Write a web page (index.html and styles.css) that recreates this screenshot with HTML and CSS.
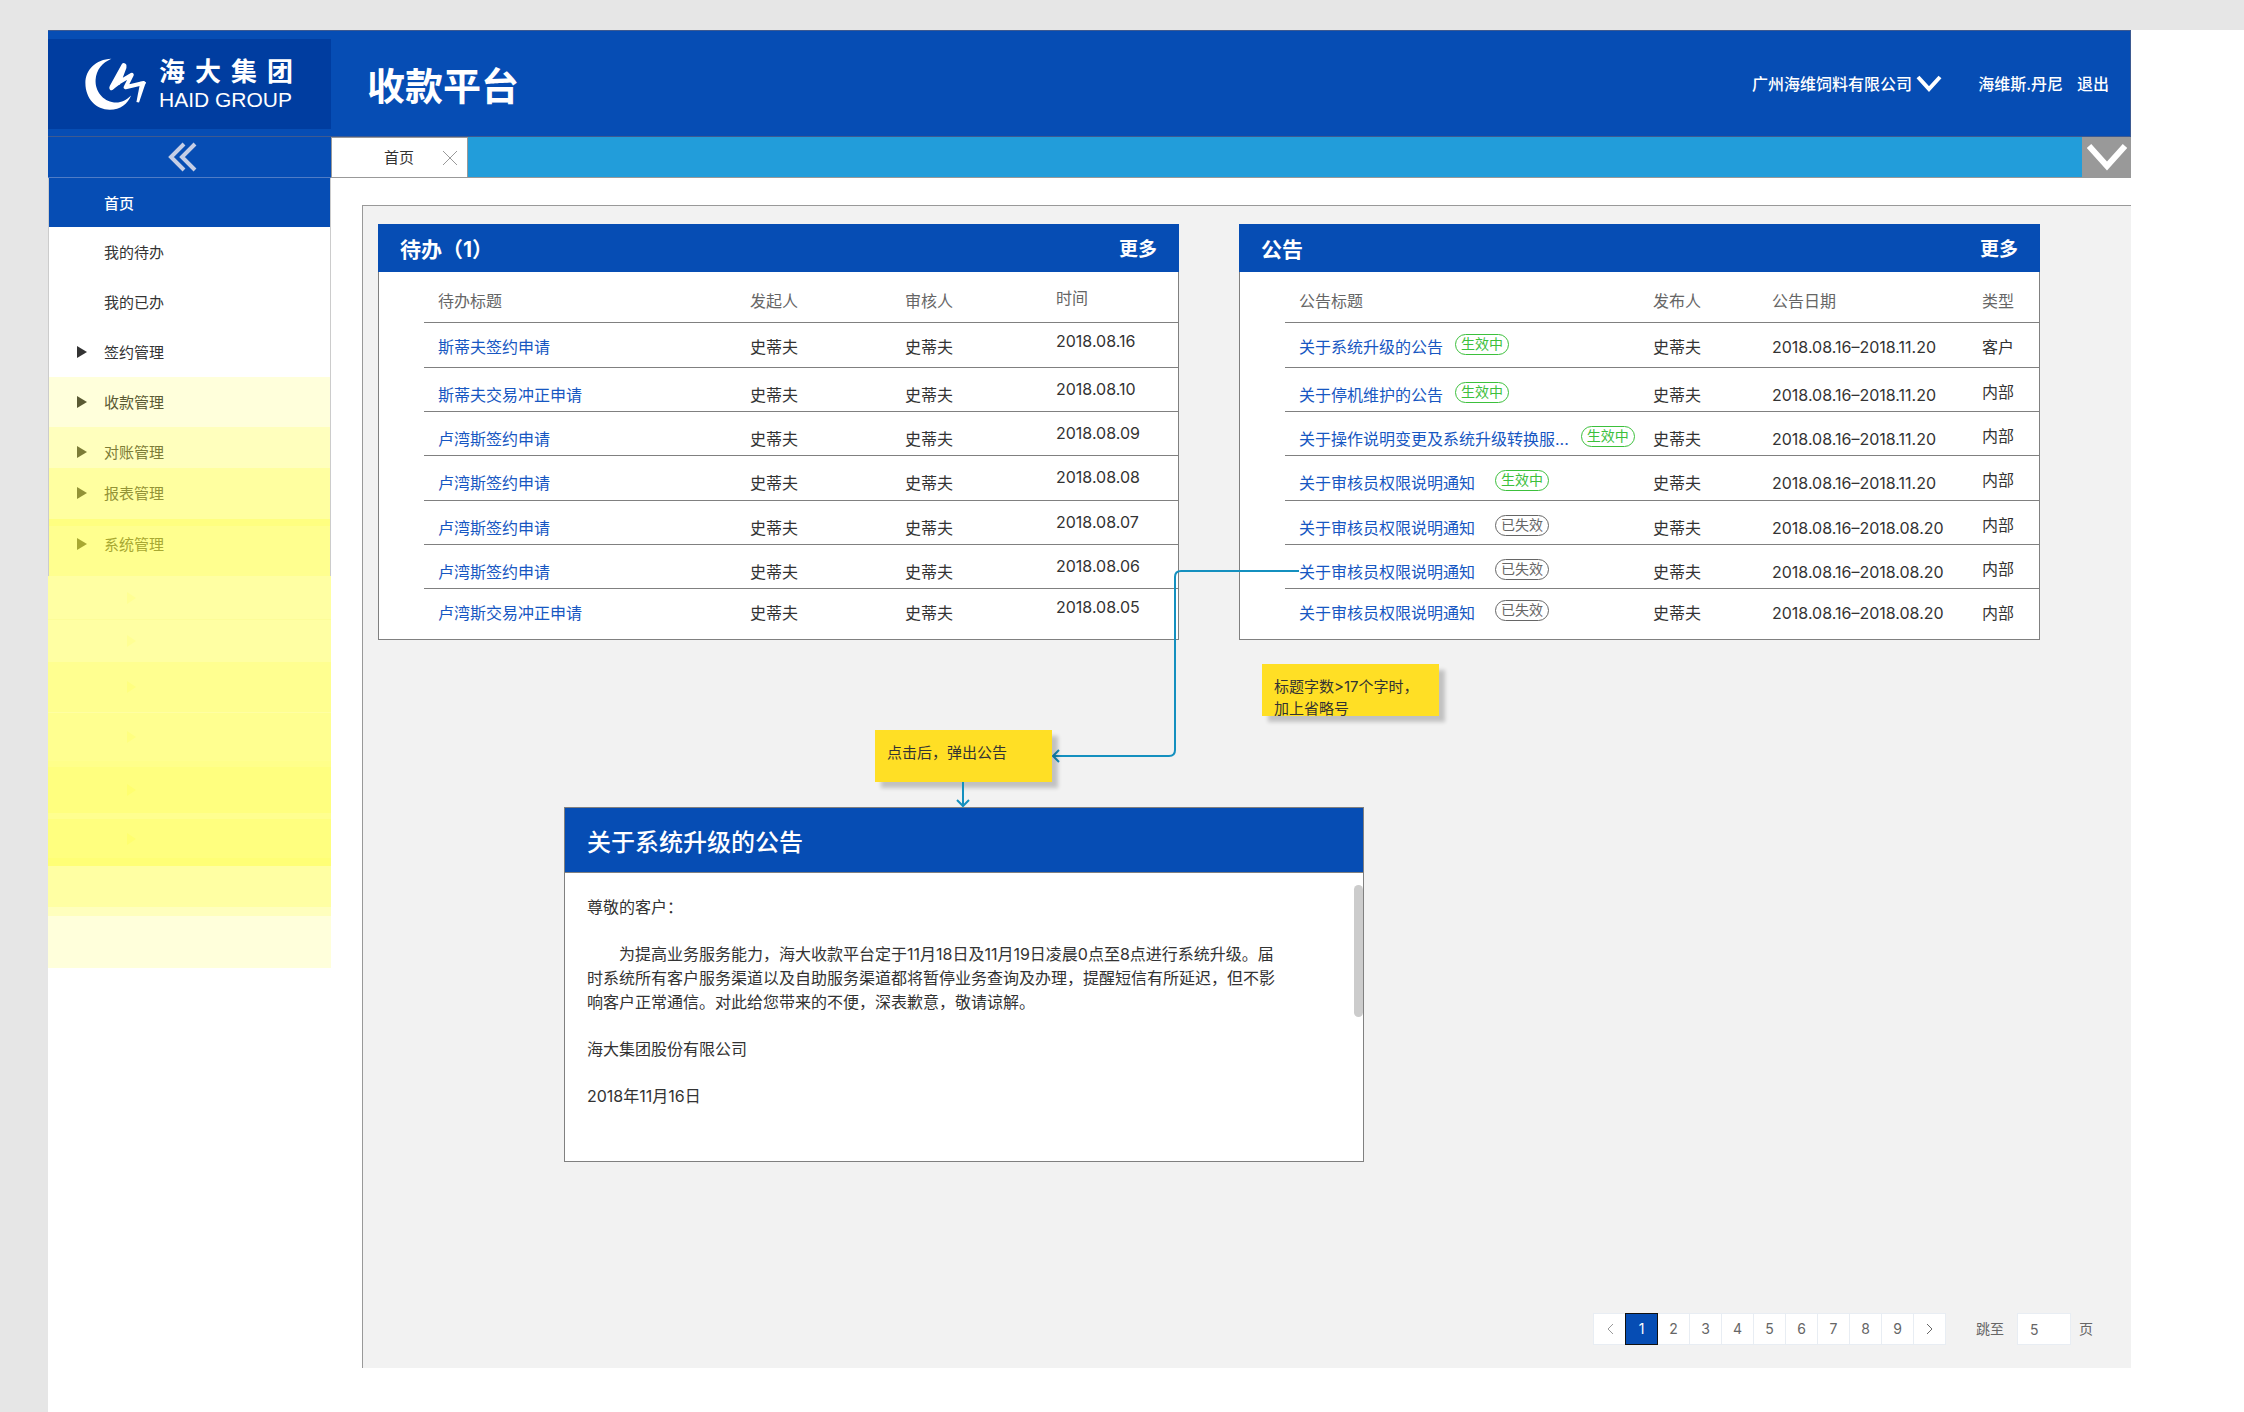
FILE: index.html
```html
<!DOCTYPE html>
<html lang="zh-CN">
<head>
<meta charset="utf-8">
<meta name="viewport" content="width=device-width, initial-scale=1">
<title>收款平台</title>
<link rel="stylesheet" href="styles.css">
</head>
<body>
<div class="canvas">
<div class="app">
  <header class="topbar">
    <a class="brand" href="#" aria-label="海大集团 HAID GROUP">
      <svg class="brand-mark" viewBox="27 22 186 158" aria-hidden="true">
        <path fill="#fff" d="M106 24C58 26 27 58 27 98C27 146 60 179 101 179C134 179 155 162 166 136C150 151 134 159 114 157C80 153 56 122 58 88C60 58 78 36 106 24Z"/>
        <path fill="none" stroke="#fff" stroke-width="15" stroke-linejoin="round" stroke-linecap="round" d="M108 110L144 45"/>
        <path fill="none" stroke="#fff" stroke-width="12" stroke-linejoin="round" stroke-linecap="round" d="M106 114L132 94L168 73L149 111L204 98M112 106L146 50L128 98"/>
        <path fill="#fff" d="M194 94L211 95L190 157L182 156Z"/>
      </svg>
      <span class="brand-name"><span class="brand-cn">海大集团</span><span class="brand-en">HAID GROUP</span></span>
    </a>
    <h1 class="title">收款平台</h1>
    <nav class="account">
      <button class="company" type="button">广州海维饲料有限公司
        <svg width="26" height="18" viewBox="0 0 26 18" aria-hidden="true"><path d="M2 2L13 14L24 2" fill="none" stroke="#fff" stroke-width="4"/></svg>
      </button>
      <a href="#">海维斯.丹尼</a>
      <a href="#">退出</a>
    </nav>
  </header>

  <div class="body">
    <aside class="sidebar">
      <button class="collapse" type="button" aria-label="收起菜单">
        <svg width="30" height="30" viewBox="0 0 30 30" aria-hidden="true"><path d="M17 2L4 15L17 28M28 2L15 15L28 28" fill="none" stroke="#c5cee6" stroke-width="4"/></svg>
      </button>
      <nav>
        <ul class="menu">
          <li class="active"><a href="#">首页</a></li>
          <li><a href="#">我的待办</a></li>
          <li><a href="#">我的已办</a></li>
          <li class="group"><a href="#">签约管理</a></li>
          <li class="group tint-1"><a href="#">收款管理</a></li>
          <li class="group tint-2"><a href="#">对账管理</a></li>
          <li class="group tint-3"><a href="#">报表管理</a></li>
          <li class="group tint-4"><a href="#">系统管理</a></li>
        </ul>
      </nav>
      <div class="bands" aria-hidden="true">
        <div class="band a"></div><div class="band a line"></div><div class="band b"></div><div class="band b tall"></div>
        <div class="band c"></div><div class="band c end"></div><div class="band fade-1"></div><div class="band fade-2"></div><div class="band fade-3"></div>
      </div>
    </aside>

    <main class="main">
      <div class="tabs">
        <div class="tab"><a href="#">首页</a>
          <button type="button" aria-label="关闭标签"><svg width="16" height="16" viewBox="0 0 16 16" aria-hidden="true"><path d="M1 1L15 15M15 1L1 15" stroke="#999" stroke-width="1"/></svg></button>
        </div>
        <button class="tabs-more" type="button" aria-label="更多标签"><svg width="42" height="28" viewBox="0 0 42 28" aria-hidden="true"><path d="M3 3L21 23L39 3" fill="none" stroke="#fff" stroke-width="6"/></svg></button>
      </div>

      <div class="content">
        <div class="cards">
          <section class="card">
            <div class="card-head"><h2>待办（1）</h2><a href="#">更多</a></div>
            <table class="todo">
              <colgroup><col><col class="w-from"><col class="w-check"><col class="w-time"></colgroup>
              <thead><tr><th>待办标题</th><th>发起人</th><th>审核人</th><th>时间</th></tr></thead>
              <tbody>
                <tr><td><a href="#">斯蒂夫签约申请</a></td><td>史蒂夫</td><td>史蒂夫</td><td>2018.08.16</td></tr>
                <tr><td><a href="#">斯蒂夫交易冲正申请</a></td><td>史蒂夫</td><td>史蒂夫</td><td>2018.08.10</td></tr>
                <tr><td><a href="#">卢湾斯签约申请</a></td><td>史蒂夫</td><td>史蒂夫</td><td>2018.08.09</td></tr>
                <tr><td><a href="#">卢湾斯签约申请</a></td><td>史蒂夫</td><td>史蒂夫</td><td>2018.08.08</td></tr>
                <tr><td><a href="#">卢湾斯签约申请</a></td><td>史蒂夫</td><td>史蒂夫</td><td>2018.08.07</td></tr>
                <tr><td><a href="#">卢湾斯签约申请</a></td><td>史蒂夫</td><td>史蒂夫</td><td>2018.08.06</td></tr>
                <tr><td><a href="#">卢湾斯交易冲正申请</a></td><td>史蒂夫</td><td>史蒂夫</td><td>2018.08.05</td></tr>
              </tbody>
            </table>
          </section>

          <section class="card">
            <div class="card-head"><h2>公告</h2><a href="#">更多</a></div>
            <table class="news">
              <colgroup><col><col class="w-by"><col class="w-date"><col class="w-type"></colgroup>
              <thead><tr><th>公告标题</th><th>发布人</th><th>公告日期</th><th>类型</th></tr></thead>
              <tbody>
                <tr><td><div class="subject"><a href="#">关于系统升级的公告</a><span class="tag on">生效中</span></div></td><td>史蒂夫</td><td>2018.08.16–2018.11.20</td><td>客户</td></tr>
                <tr><td><div class="subject"><a href="#">关于停机维护的公告</a><span class="tag on">生效中</span></div></td><td>史蒂夫</td><td>2018.08.16–2018.11.20</td><td>内部</td></tr>
                <tr><td><div class="subject"><a href="#">关于操作说明变更及系统升级转换服...</a><span class="tag on">生效中</span></div></td><td>史蒂夫</td><td>2018.08.16–2018.11.20</td><td>内部</td></tr>
                <tr><td><div class="subject wide"><a href="#">关于审核员权限说明通知</a><span class="tag on">生效中</span></div></td><td>史蒂夫</td><td>2018.08.16–2018.11.20</td><td>内部</td></tr>
                <tr><td><div class="subject wide"><a href="#">关于审核员权限说明通知</a><span class="tag">已失效</span></div></td><td>史蒂夫</td><td>2018.08.16–2018.08.20</td><td>内部</td></tr>
                <tr><td><div class="subject wide"><a href="#">关于审核员权限说明通知</a><span class="tag">已失效</span></div></td><td>史蒂夫</td><td>2018.08.16–2018.08.20</td><td>内部</td></tr>
                <tr><td><div class="subject wide"><a href="#">关于审核员权限说明通知</a><span class="tag">已失效</span></div></td><td>史蒂夫</td><td>2018.08.16–2018.08.20</td><td>内部</td></tr>
              </tbody>
            </table>
            <aside class="note note-title">标题字数&gt;17个字时，<br>加上省略号</aside>
            <svg class="link-line" width="250" height="200" viewBox="0 0 250 200" aria-hidden="true"><g fill="none" stroke="#1490bf" stroke-width="2"><path d="M248 6H130Q124 6 124 12V185Q124 191 118 191H2"/><path d="M8 185L2 191L8 197"/></g></svg>
          </section>
        </div>

        <section class="dialog">
          <h2>关于系统升级的公告</h2>
          <div class="dialog-body">
            <p>尊敬的客户：</p>
            <p class="indent">为提高业务服务能力，海大收款平台定于11月18日及11月19日凌晨0点至8点进行系统升级。届时系统所有客户服务渠道以及自助服务渠道都将暂停业务查询及办理，提醒短信有所延迟，但不影响客户正常通信。对此给您带来的不便，深表歉意，敬请谅解。</p>
            <p>海大集团股份有限公司</p>
            <p>2018年11月16日</p>
            <span class="thumb"></span>
          </div>
          <aside class="note note-click">点击后，弹出公告</aside>
          <svg class="down-line" width="16" height="26" viewBox="0 0 16 26" aria-hidden="true"><path d="M8 0V24M2 18L8 24L14 18" fill="none" stroke="#1490bf" stroke-width="2"/></svg>
        </section>

        <nav class="pager" aria-label="分页">
          <div class="pages">
            <button type="button" class="off" aria-label="上一页"><svg width="8" height="12" viewBox="0 0 8 12" aria-hidden="true"><path d="M7 1L2 6L7 11" fill="none" stroke="currentColor" stroke-width="1"/></svg></button>
            <button type="button" class="current">1</button><button type="button">2</button><button type="button">3</button><button type="button">4</button><button type="button">5</button><button type="button">6</button><button type="button">7</button><button type="button">8</button><button type="button">9</button>
            <button type="button" aria-label="下一页"><svg width="8" height="12" viewBox="0 0 8 12" aria-hidden="true"><path d="M1 1L6 6L1 11" fill="none" stroke="currentColor" stroke-width="1"/></svg></button>
          </div>
          <label for="jump">跳至</label>
          <input id="jump" type="text" value="5">
          <span>页</span>
        </nav>
      </div>
    </main>
  </div>
</div>
</div>
</body>
</html>
```
FILE: styles.css
```css
* { box-sizing: border-box; }

body {
  margin: 0;
  min-height: 100vh;
  display: flex;
  flex-direction: column;
  padding: 30px 0 0 48px;
  background: #e6e6e6;
  color: #333;
  font: 16px/22px Inter, "Noto Sans CJK SC", sans-serif;
}

h1, h2, p, ul { margin: 0; padding: 0; }
ul { list-style: none; }
a { color: inherit; text-decoration: none; }
button { margin: 0; padding: 0; border: 0; background: none; color: inherit; font: inherit; cursor: pointer; }
svg { display: block; }

.canvas { flex: 1; display: flex; background: #fff; padding: 0 113px 44px 0; }
.app { flex: 1; min-width: 0; display: flex; flex-direction: column; }

/* top bar */
.topbar {
  display: flex;
  align-items: center;
  height: 107px;
  border: 1px solid #3d5a91;
  border-left: 0;
  background: #064db4;
  color: #fff;
}
.brand {
  width: 283px;
  height: 90px;
  display: flex;
  align-items: center;
  gap: 12px;
  padding-left: 37px;
  background: #003da0;
}
.brand-mark { width: 62px; height: 52px; }
.brand-name { width: 134px; display: flex; flex-direction: column; padding-top: 3px; }
.brand-cn { font-size: 26px; line-height: 30px; font-weight: 700; text-align-last: justify; }
.brand-en { font: 21px/26px "Liberation Sans", sans-serif; white-space: nowrap; }
.title { flex: 1; padding: 5px 0 0 36px; font-size: 38px; line-height: 48px; font-weight: 700; }
.account { display: flex; align-items: center; gap: 14px; padding-right: 21px; font-weight: 500; }
.company { display: flex; align-items: center; gap: 4px; margin-right: 22px; }

.body { flex: 1; display: flex; }

/* side menu */
.sidebar { width: 283px; }
.collapse {
  width: 100%;
  height: 41px;
  display: flex;
  align-items: center;
  padding-left: 119px;
  border-bottom: 1px solid #4f7cc6;
  background: #064db4;
}
.menu { border: solid #ccc; border-width: 0 1px; font-size: 15px; line-height: 20px; }
.menu li { height: 50px; padding: 16px 0 0 55px; }
.menu .active { height: 49px; background: #064db4; color: #fff; font-weight: 500; }
.menu .group { display: flex; align-items: flex-start; gap: 17px; padding-left: 28px; }
.menu .group::before {
  content: "";
  margin-top: 3px;
  border: solid transparent;
  border-width: 6px 0 6px 10px;
  border-left-color: currentColor;
}
.menu .tint-1 { background: #ffffdb; color: #5a5a33; }
.menu .tint-2 { height: 41px; background: #ffffbd; color: #7c7c37; }
.menu .tint-3 { height: 51px; background: #ffffa0; color: #939336; }
.menu .tint-4 { height: 57px; padding-top: 9px; border-top: 7px solid #ffff80; background: #ffff8f; color: #a8a832; }

.band { height: 43px; display: flex; align-items: center; padding-left: 79px; }
.band::before { content: ""; border: solid transparent; border-width: 6px 0 6px 9px; }
.band.a { background: #ffffa3; }
.band.a::before { border-left-color: #ffff94; }
.band.line { border-top: 1px solid #fdfd98; }
.band.b { height: 51px; background: #ffff90; border-bottom: 1px solid #ffffa3; }
.band.b::before { border-left-color: #ffff80; }
.band.tall { height: 54px; border-bottom: 6px solid #ffff8a; }
.band.c { height: 52px; background: #ffff7f; border-bottom: 6px solid #ffff90; }
.band.c::before { border-left-color: #ffff70; }
.band.end { height: 47px; border-bottom: 8px solid #ffff76; }
.band.fade-1 { height: 41px; background: #ffffa3; }
.band.fade-2 { height: 9px; background: #ffffbd; }
.band.fade-3 { height: 52px; background: #ffffdb; }

/* tabs */
.main { flex: 1; min-width: 0; display: flex; flex-direction: column; gap: 27px; }
.tabs { display: flex; justify-content: space-between; height: 41px; border-bottom: 1px solid #999; background: #229dda; }
.tab {
  width: 137px;
  height: 41px;
  display: flex;
  align-items: center;
  justify-content: space-between;
  padding: 0 9px 0 52px;
  border: 1px solid #999;
  background: #fff;
  font-size: 15px;
}
.tabs-more { width: 49px; display: flex; align-items: center; justify-content: center; background: #999; }

/* workspace */
.content {
  flex: 1;
  display: flex;
  flex-direction: column;
  margin-left: 31px;
  padding: 18px 0 23px 15px;
  border: solid #999;
  border-width: 1px 0 0 1px;
  background: #f2f2f2;
}
.cards { display: grid; grid-template-columns: 1fr 1fr; gap: 60px; padding-right: 91px; }
.card { position: relative; background: #fff; border: 1px solid #808080; border-top: 0; }
.card-head {
  height: 48px;
  margin: 0 -1px;
  display: flex;
  align-items: center;
  justify-content: space-between;
  padding: 3px 22px 0;
  background: #064db4;
  color: #fff;
}
.card-head h2 { font-size: 21px; line-height: 30px; font-weight: 700; }
.card-head a { font-size: 19px; font-weight: 700; }

.card table { width: calc(100% - 45px); margin-left: 45px; border-collapse: collapse; table-layout: fixed; }
th, td { padding: 16px 0 0 14px; text-align: left; vertical-align: top; white-space: nowrap; }
th { height: 50px; padding-top: 18px; color: #666; font-weight: 400; }
tbody tr { height: 44px; border-top: 1px solid #808080; }
tbody tr:first-child, tbody tr:nth-child(4) { height: 45px; }
tbody tr:last-child { height: 51px; }
tbody tr:first-child td, tbody tr:last-child td { padding-top: 13px; }
.news td:last-child { padding-top: 13px; }
.todo td:last-child { padding-top: 10px; }
.todo tbody tr:first-child td:last-child, .todo tbody tr:last-child td:last-child { padding-top: 7px; }
.todo th:last-child { padding-top: 15px; }
td a { color: #1757c2; }
.w-from { width: 155px; }
.w-check { width: 151px; }
.w-time { width: 136px; }
.w-by { width: 119px; }
.w-date { width: 210px; }
.w-type { width: 71px; }

.subject { display: flex; align-items: flex-start; gap: 12px; }
.subject.wide { gap: 20px; }
.tag { height: 21px; margin-top: -2px; padding: 0 5px; border: 1px solid #666; border-radius: 11px; color: #666; font-size: 14px; line-height: 18px; }
.tag.on { border-color: #3cc03c; color: #3cc03c; }

/* sticky notes and connectors */
.note {
  position: absolute;
  width: 177px;
  height: 52px;
  overflow: hidden;
  padding: 12px;
  background: #ffdf25;
  box-shadow: 6px 6px 4px rgba(0, 0, 0, .2);
  font-size: 15px;
  white-space: nowrap;
}
.note-title { left: 22px; top: calc(100% + 25px); }
.note-click { left: 310px; top: -78px; }
.link-line { position: absolute; right: calc(100% - 61px); bottom: -126px; }
.down-line { position: absolute; left: 390px; top: -26px; }

/* announcement dialog */
.dialog { position: relative; width: 100%; max-width: 800px; margin: 167px 0 60px 186px; border: 1px solid #808080; background: #fff; }
.dialog h2 { padding: 20px 22px 14px; border-bottom: 1px solid #808080; background: #064db4; color: #fff; font-size: 24px; line-height: 30px; font-weight: 500; }
.dialog-body { position: relative; display: flex; flex-direction: column; gap: 23px; min-height: 288px; padding: 22px; line-height: 24px; }
.dialog-body p { max-width: 700px; }
.indent { text-indent: 2em; }
.thumb { position: absolute; top: 12px; right: 0; width: 9px; height: 132px; border-radius: 5px; background: #ccc; }

/* pager */
.pager { margin-top: auto; display: flex; align-items: center; justify-content: flex-end; padding-right: 38px; color: #666; font-size: 14px; }
.pages { display: flex; margin-right: 31px; }
.pages button { width: 33px; height: 32px; margin-right: -1px; display: flex; align-items: center; justify-content: center; border: 1px solid #e8edf3; background: #fff; }
.pages .off { color: #999; }
.pages .current { z-index: 1; border-color: #111; background: #064db4; color: #fff; }
.pager input { width: 54px; height: 32px; margin: 0 8px 0 13px; padding: 0 12px; border: 1px solid #e8edf3; background: #fff; color: #666; font: inherit; }
```
